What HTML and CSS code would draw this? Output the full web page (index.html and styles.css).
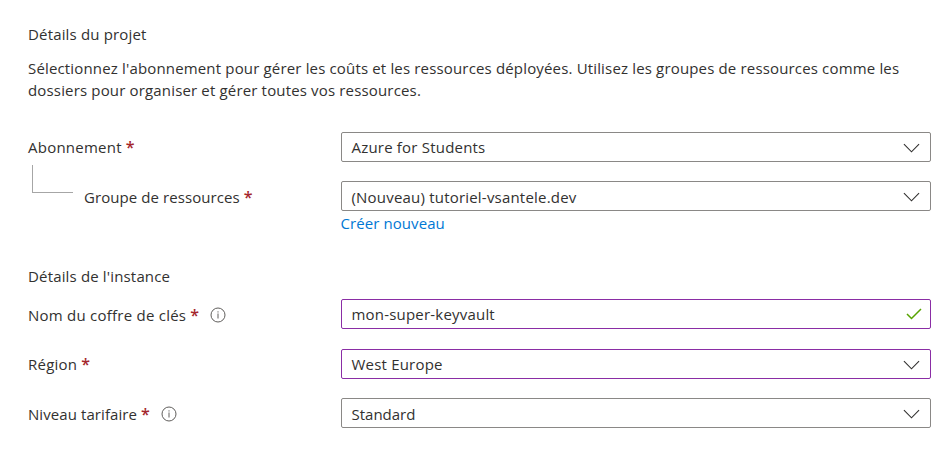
FILE: index.html
```html
<!DOCTYPE html>
<html lang="fr">
<head>
<meta charset="utf-8">
<title>Créer un coffre de clés</title>
<link rel="stylesheet" href="styles.css">
</head>
<body>
<main class="form">
  <section class="project">
    <h2>Détails du projet</h2>
    <p class="intro">Sélectionnez l'abonnement pour gérer les coûts et les ressources déployées. Utilisez les groupes de ressources comme les dossiers pour organiser et gérer toutes vos ressources.</p>
    <div class="row">
      <div class="label wide"><span>Abonnement</span><span class="req">*</span></div>
      <div class="field"><span>Azure for Students</span><svg class="chevron" viewBox="0 0 18 10"><path d="M1 1l8 8 8-8"/></svg></div>
    </div>
    <div class="row nested">
      <div class="label low"><i class="branch"></i><span>Groupe de ressources</span><span class="req">*</span></div>
      <div class="field low-text"><span>(Nouveau) tutoriel-vsantele.dev</span><svg class="chevron" viewBox="0 0 18 10"><path d="M1 1l8 8 8-8"/></svg></div>
    </div>
    <a class="create">Créer nouveau</a>
  </section>
  <section class="instance">
    <h2>Détails de l'instance</h2>
    <div class="row">
      <div class="label wide low"><span>Nom du coffre de clés</span><span class="req">*</span><svg class="info" viewBox="0 0 16 16"><circle cx="8" cy="8" r="7"/><path d="M8 6.5v5M8 4.3v1.2"/></svg></div>
      <div class="field edited"><span>mon-super-keyvault</span><svg class="check" viewBox="0 0 16 12"><path d="M1 6l4.5 4.5L15 1"/></svg></div>
    </div>
    <div class="row">
      <div class="label wide"><span>Région</span><span class="req">*</span></div>
      <div class="field edited"><span>West Europe</span><svg class="chevron" viewBox="0 0 18 10"><path d="M1 1l8 8 8-8"/></svg></div>
    </div>
    <div class="row last">
      <div class="label low"><span>Niveau tarifaire</span><span class="req">*</span><svg class="info" viewBox="0 0 16 16"><circle cx="8" cy="8" r="7"/><path d="M8 6.5v5M8 4.3v1.2"/></svg></div>
      <div class="field low-text short"><span>Standard</span><svg class="chevron" viewBox="0 0 18 10"><path d="M1 1l8 8 8-8"/></svg></div>
    </div>
  </section>
</main>
</body>
</html>
```
FILE: styles.css
```css
* { box-sizing: border-box; }
body { margin: 0; background: #fff; color: #323130; font: 15px/22px "Open Sans", "Noto Sans", sans-serif; letter-spacing: .16px; }
.form { padding: 23px 18px 0 28px; }
h2 { margin: 0; font-size: 15px; font-weight: 400; line-height: 22px; }
.intro { margin: 12px 0 31px; width: 890px; }
.row { display: grid; grid-template-columns: 313px 590px; align-items: center; height: 30px; }
.row + .row { margin-top: 20px; }
.row + .row.nested, .row + .row.last { margin-top: 19px; }
.label { display: flex; align-items: center; white-space: nowrap; letter-spacing: .08px; }
.label.wide { letter-spacing: .24px; }
.label.low { padding-top: 2px; }
.req { margin-left: 4px; color: #a4262c; font-size: 16px; font-weight: 600; letter-spacing: 0; line-height: 22px; }
.info { width: 16px; height: 16px; margin: -1px 0 0 11px; fill: none; stroke: #605e5c; }
.branch { width: 41px; height: 28px; margin: -36px 11px 0 4px; border: solid #a6a6a6; border-width: 0 0 1px 1px; }
.field { display: flex; align-items: center; justify-content: space-between; height: 30px; padding: 0 10px 0 9.5px; border: 1px solid #8a8886; border-radius: 2px; letter-spacing: .2px; }
.field.low-text span { padding-top: 2px; }
.field.short { letter-spacing: 0; }
.field.edited { border-color: #8a2da5; }
.chevron { width: 17px; height: 10px; margin-top: 1px; fill: none; stroke: #323130; stroke-width: 1.2; }
.check { width: 16px; height: 12px; margin-right: -2px; fill: none; stroke: #57a300; stroke-width: 1.5; }
.create { display: block; margin: 1px 0 0 312.5px; color: #0078d4; letter-spacing: .08px; }
.instance { margin-top: 31px; }
.instance h2 { margin-bottom: 12px; }
```
